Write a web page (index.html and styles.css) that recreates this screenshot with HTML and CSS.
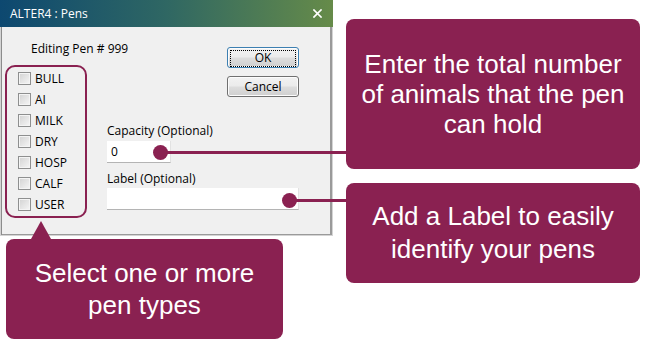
FILE: index.html
```html
<!DOCTYPE html>
<html lang="en">
<head>
    <meta charset="UTF-8">
    <meta name="viewport" content="width=device-width, initial-scale=1.0">
    <title>ALTER4 : Pens</title>
    <link rel="stylesheet" href="styles.css">
</head>
<body>

    <div class="canvas">
        <div class="left">
            <!-- Dialog window -->
            <div class="window">
                <div class="titlebar">
                    <span>ALTER4 : Pens</span>
                    <svg class="close" width="9" height="9" viewBox="0 0 9 9">
                        <path d="M1 1 L8 8 M8 1 L1 8" stroke="#fff" stroke-width="1.7" stroke-linecap="square"/>
                    </svg>
                </div>
                <div class="dialog">
                    <div class="types-col">
                        <p class="editing">Editing Pen # 999</p>
                        <div class="types">
                            <label class="check"><span class="box"></span>BULL</label>
                            <label class="check"><span class="box"></span>AI</label>
                            <label class="check"><span class="box"></span>MILK</label>
                            <label class="check"><span class="box"></span>DRY</label>
                            <label class="check"><span class="box"></span>HOSP</label>
                            <label class="check"><span class="box"></span>CALF</label>
                            <label class="check"><span class="box"></span>USER</label>
                        </div>
                    </div>
                    <div class="fields-col">
                        <div class="buttons">
                            <button class="btn btn-default"><span>OK</span></button>
                            <button class="btn">Cancel</button>
                        </div>
                        <div class="field-label">Capacity (Optional)</div>
                        <div class="input input-short">0</div>
                        <div class="field-label field-label-second">Label (Optional)</div>
                        <div class="input input-long"></div>
                    </div>
                </div>
            </div>

            <!-- Pen types callout -->
            <div class="callout callout-types">Select one or more<br>pen types</div>
        </div>

        <div class="right">
            <div class="callout callout-capacity">Enter the total number<br>of animals that the pen<br>can hold</div>
            <div class="callout callout-label">Add a Label to easily<br>identify your pens</div>
        </div>

        <!-- Connector lines from fields to callouts -->
        <span class="connector connector-capacity"></span>
        <span class="connector connector-label"></span>
    </div>

</body>
</html>
```

FILE: styles.css
```css
body {
    margin: 0;
    background-color: #fff;
    font-family: "Open Sans", "Noto Sans", sans-serif;
}

.canvas {
    position: relative;
    width: 652px;
    height: 353px;
    display: grid;
    grid-template-columns: 333px 294px;
    column-gap: 13px;
    align-items: start;
}

/* Window */

.window {
    width: 333px;
}

.titlebar {
    height: 27px;
    display: flex;
    justify-content: space-between;
    align-items: center;
    padding: 0 11px 0 10px;
    background: linear-gradient(to right, #0d4870, #2f6763 50%, #668b49);
    color: #fff;
    font-size: 12px;
}

.close {
    display: block;
}

.dialog {
    height: 208px;
    display: flex;
    background-color: #f0f0f0;
    border: 1px solid #d4d4d4;
    border-top: none;
    box-shadow: inset 1px 0 0 #8c8c8c, inset -2px -1px 0 #9a9a9a;
    padding-left: 4px;
    font-size: 12px;
    color: #000;
}

.types-col {
    width: 82px;
}

.editing {
    margin: 14px 0 0 26px;
    line-height: 15px;
    white-space: nowrap;
}

.types {
    margin-top: 9px;
    border: 2px solid #8a2151;
    border-radius: 10px;
    padding: 1px 0 1px 11px;
}

.check {
    height: 21px;
    display: flex;
    align-items: center;
    gap: 4px;
    line-height: 15px;
}

.box {
    width: 11px;
    height: 11px;
    border: 1px solid #8e8f8f;
    box-shadow: inset 0 0 0 1px #f4f4f4;
    background: linear-gradient(135deg, #d2d2d2, #f6f6f6);
}

.fields-col {
    margin-left: 20px;
}

.buttons {
    margin: 20px 0 0 120px;
    display: flex;
    flex-direction: column;
    gap: 8px;
}

.btn {
    width: 72px;
    height: 21px;
    padding: 0;
    font-family: inherit;
    font-size: 12px;
    color: #000;
    border: 1px solid #707070;
    border-radius: 3px;
    background: linear-gradient(to bottom, #f2f2f2 0%, #ebebeb 48%, #dddddd 52%, #cfcfcf 100%);
    box-shadow: inset 0 0 0 1px #fcfcfc;
}

.btn-default {
    border-color: #3c7fb1;
    padding: 2px;
}

.btn-default span {
    display: block;
    height: 15px;
    line-height: 14px;
    border: 1px dotted #000;
}

.field-label {
    margin-top: 26px;
    line-height: 15px;
}

.field-label-second {
    margin-top: 8px;
}

.input {
    margin-top: 3px;
    height: 22px;
    box-sizing: border-box;
    background-color: #fff;
    border-bottom: 1px solid #b4b4b4;
    border-right: 1px solid #e2e2e2;
    padding: 3px 4px;
    line-height: 15px;
}

.field-label-second + .input {
    margin-top: 2px;
}

.input-short {
    width: 64px;
}

.input-long {
    width: 192px;
}

/* Callouts */

.callout {
    box-sizing: border-box;
    display: flex;
    align-items: center;
    justify-content: center;
    text-align: center;
    background-color: #8a2151;
    color: #fff;
    border-radius: 8px;
    font-family: "Liberation Sans", Arial, sans-serif;
    font-size: 26px;
}

.callout-types {
    position: relative;
    width: 277px;
    height: 100px;
    margin: 3px 0 0 6px;
    line-height: 32px;
}

.callout-types::before {
    content: "";
    position: absolute;
    bottom: 100%;
    left: 25px;
    border-left: 10px solid transparent;
    border-right: 10px solid transparent;
    border-bottom: 18px solid #8a2151;
}

.right {
    padding-top: 19px;
    display: flex;
    flex-direction: column;
    gap: 14px;
}

.callout-capacity {
    height: 150px;
    line-height: 30px;
}

.callout-label {
    height: 100px;
    line-height: 33px;
}

.connector {
    position: absolute;
    height: 3px;
    background-color: #8a2151;
}

.connector::before {
    content: "";
    position: absolute;
    left: -7px;
    top: -6px;
    width: 15px;
    height: 15px;
    border-radius: 50%;
    background-color: #8a2151;
}

.connector-capacity {
    left: 160px;
    top: 151px;
    width: 186px;
}

.connector-label {
    left: 289px;
    top: 199px;
    width: 57px;
}
```
